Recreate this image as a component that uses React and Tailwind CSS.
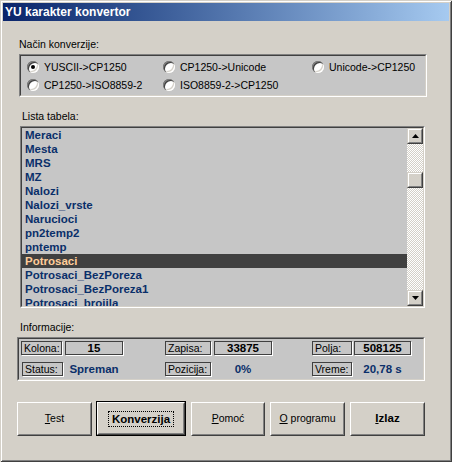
import React from "react";

const F = { fontFamily: '"Liberation Sans", Arial, sans-serif' };

function Radio({ checked }) {
  return (
    <span className="relative inline-block w-[12px] h-[12px] shrink-0 rounded-full bg-white shadow-[inset_1px_1px_0_#808080,inset_2px_2px_0_#404040,inset_-1px_-1px_0_#ffffff,inset_-2px_-2px_0_#d4d0c8]">
      {checked && <span className="absolute left-[4px] top-[4px] w-[4px] h-[4px] rounded-full bg-black" />}
    </span>
  );
}

function RadioItem({ label, checked, w }) {
  return (
    <div className={`flex items-center gap-[5px] h-[18px] ${w}`}>
      <Radio checked={checked} />
      <span className="text-[10.5px] leading-[12px] text-black whitespace-nowrap">{label}</span>
    </div>
  );
}

function Sunken({ className, children }) {
  return (
    <div className={`border border-t-[#808080] border-l-[#808080] border-r-white border-b-white ${className}`}>
      <div className="w-full h-full border border-t-[#404040] border-l-[#404040] border-r-[#d4d0c8] border-b-[#d4d0c8] bg-[#c6c6c6] overflow-hidden">
        {children}
      </div>
    </div>
  );
}

function ScrollBtn({ down }) {
  return (
    <div className="w-[16px] h-[16px] shrink-0 border border-t-[#d4d0c8] border-l-[#d4d0c8] border-r-[#404040] border-b-[#404040]">
      <div className="w-full h-full bg-[#d4d0c8] border border-t-white border-l-white border-r-[#808080] border-b-[#808080] flex items-center justify-center">
        {down !== undefined && (
          <svg width="7" height="4" viewBox="0 0 7 4" className="block">
            {down ? <polygon points="0,0 7,0 3.5,4" fill="#000" /> : <polygon points="0,4 7,4 3.5,0" fill="#000" />}
          </svg>
        )}
      </div>
    </div>
  );
}

function Btn({ w, children, def }) {
  const inner = (
    <div className="w-full h-full border border-t-white border-l-white border-r-[#404040] border-b-[#404040]">
      <div className="w-full h-full border border-t-[#d4d0c8] border-l-[#d4d0c8] border-r-[#808080] border-b-[#808080] bg-[#d4d0c8] flex items-center justify-center text-[10.5px] text-black">
        {children}
      </div>
    </div>
  );
  if (def) {
    return <div className={`${w} h-[35px] border border-black shrink-0`}>{inner}</div>;
  }
  return <div className={`${w} h-[34px] mt-[1px] shrink-0`}>{inner}</div>;
}

function LabelBox({ w, children }) {
  return (
    <div className={`${w} h-[14px] shrink-0 border border-[#404040] shadow-[1px_1px_0_#ffffff] flex items-center px-[2px] text-[10.5px] leading-[12px] text-black whitespace-nowrap`}>
      {children}
    </div>
  );
}

function ValueBox({ w, children }) {
  return (
    <div className={`${w} h-[14px] shrink-0 border border-[#404040] shadow-[1px_1px_0_#ffffff] flex items-center justify-center text-[11.5px] leading-[12px] font-bold text-black`}>
      {children}
    </div>
  );
}

function ValueText({ w, children }) {
  return (
    <div className={`${w} h-[14px] shrink-0 flex items-center justify-center text-[11.5px] leading-[12px] font-bold text-[#0a2f6a] whitespace-nowrap`}>
      {children}
    </div>
  );
}

const items = [
  "Meraci",
  "Mesta",
  "MRS",
  "MZ",
  "Nalozi",
  "Nalozi_vrste",
  "Narucioci",
  "pn2temp2",
  "pntemp",
  "Potrosaci",
  "Potrosaci_BezPoreza",
  "Potrosaci_BezPoreza1",
  "Potrosaci_brojila",
];

export default function App() {
  return (
    <div
      style={F}
      className="w-[452px] h-[462px] bg-[#d4d0c8] p-[3px] flex flex-col overflow-hidden shadow-[inset_1px_1px_0_#d4d0c8,inset_-1px_-1px_0_#404040,inset_2px_2px_0_#ffffff,inset_-2px_-2px_0_#808080]"
    >
      {/* Title bar */}
      <div className="h-[18px] shrink-0 flex items-center pl-[2px] bg-gradient-to-r from-[#0a246a] to-[#a6caf0]">
        <span className="text-white font-bold text-[12px] leading-[14px]">YU karakter konvertor</span>
      </div>

      {/* Način konverzije */}
      <div className="mt-[17px] ml-[16px] text-[10.5px] leading-[13px] text-black">Način konverzije:</div>
      <Sunken className="mt-[3px] ml-[16px] w-[408px] h-[43px]">
        <div className="pl-[6px] pt-[2px] flex flex-col">
          <div className="flex">
            <RadioItem label="YUSCII->CP1250" checked w="w-[136px]" />
            <RadioItem label="CP1250->Unicode" w="w-[149px]" />
            <RadioItem label="Unicode->CP1250" w="w-[110px]" />
          </div>
          <div className="flex">
            <RadioItem label="CP1250->ISO8859-2" w="w-[136px]" />
            <RadioItem label="ISO8859-2->CP1250" w="w-[149px]" />
          </div>
        </div>
      </Sunken>

      {/* Lista tabela */}
      <div className="mt-[13px] ml-[19px] text-[10.5px] leading-[13px] text-black">Lista tabela:</div>
      <Sunken className="mt-[3px] ml-[17px] w-[405px] h-[182px]">
        <div className="flex h-full">
          <div className="flex-1 overflow-hidden">
            {items.map((it) => (
              <div
                key={it}
                className={`h-[14px] pl-[3px] flex items-center text-[11.5px] leading-[14px] font-bold whitespace-nowrap ${
                  it === "Potrosaci" ? "bg-[#404040] text-[#ffcc99]" : "text-[#0a2f6a]"
                }`}
              >
                {it}
              </div>
            ))}
          </div>
          <div className="w-[16px] h-full flex flex-col shrink-0">
            <ScrollBtn down={false} />
            <div className="flex-1 pt-[28px] [background-image:repeating-conic-gradient(#ffffff_0_25%,#d4d0c8_0_50%)] [background-size:2px_2px]">
              <ScrollBtn />
            </div>
            <ScrollBtn down />
          </div>
        </div>
      </Sunken>

      {/* Informacije */}
      <div className="mt-[13px] ml-[17px] text-[10.5px] leading-[13px] text-black">Informacije:</div>
      <Sunken className="mt-[3px] ml-[14px] w-[408px] h-[44px]">
        <div className="pt-[2px] pl-[2px] flex flex-col">
          <div className="flex">
            <LabelBox w="w-[41px]">Kolona:</LabelBox>
            <div className="ml-[3px]"><ValueBox w="w-[58px]">15</ValueBox></div>
            <div className="ml-[42px]"><LabelBox w="w-[46px]">Zapisa:</LabelBox></div>
            <div className="ml-[3px]"><ValueBox w="w-[58px]">33875</ValueBox></div>
            <div className="ml-[40px]"><LabelBox w="w-[40px]">Polja:</LabelBox></div>
            <div className="ml-[2px]"><ValueBox w="w-[57px]">508125</ValueBox></div>
          </div>
          <div className="flex mt-[7px]">
            <div className="ml-[1px]"><LabelBox w="w-[41px]">Status:</LabelBox></div>
            <div className="ml-[2px]"><ValueText w="w-[58px]">Spreman</ValueText></div>
            <div className="ml-[42px]"><LabelBox w="w-[46px]">Pozicija:</LabelBox></div>
            <div className="ml-[3px]"><ValueText w="w-[58px]">0%</ValueText></div>
            <div className="ml-[40px]"><LabelBox w="w-[40px]">Vreme:</LabelBox></div>
            <div className="ml-[2px]"><ValueText w="w-[57px]">20,78 s</ValueText></div>
          </div>
        </div>
      </Sunken>

      {/* Buttons */}
      <div className="mt-[20px] ml-[14px] flex items-start">
        <Btn w="w-[75px]">
          <span><u className="underline-offset-1">T</u>est</span>
        </Btn>
        <div className="ml-[4px]">
          <Btn w="w-[90px]" def>
            <span className="font-bold text-[11.5px] leading-[12px] px-[3px] py-[1px] outline outline-1 outline-dotted outline-black">
              Konverzija
            </span>
          </Btn>
        </div>
        <div className="ml-[5px]">
          <Btn w="w-[74px]">
            <span><u className="underline-offset-1">P</u>omoć</span>
          </Btn>
        </div>
        <div className="ml-[5px]">
          <Btn w="w-[75px]">
            <span><u className="underline-offset-1">O</u> programu</span>
          </Btn>
        </div>
        <div className="ml-[5px]">
          <Btn w="w-[75px]">
            <span className="font-bold text-[11.5px]"><u className="underline-offset-1">I</u>zlaz</span>
          </Btn>
        </div>
      </div>
    </div>
  );
}
